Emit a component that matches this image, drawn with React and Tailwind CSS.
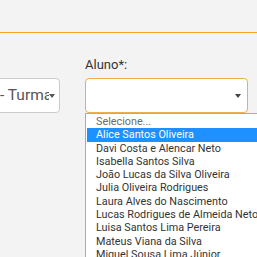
import React from "react";

const Arrow = ({ color = "#444" }) => (
  <svg width="6" height="4" viewBox="0 0 6 4" className="shrink-0">
    <path d="M0 0 L6 0 L3 4 Z" fill={color} />
  </svg>
);

const options = [
  "Alice Santos Oliveira",
  "Davi Costa e Alencar Neto",
  "Isabella Santos Silva",
  "João Lucas da Silva Oliveira",
  "Julia Oliveira Rodrigues",
  "Laura Alves do Nascimento",
  "Lucas Rodrigues de Almeida Neto",
  "Luisa Santos Lima Pereira",
  "Mateus Viana da Silva",
  "Miguel Sousa Lima Júnior",
  "Pedro Henrique Costa",
];

export default function App() {
  return (
    <div
      className="w-[257px] h-[257px] overflow-hidden bg-[#f3f3f3] text-[#333]"
      style={{ fontFamily: "Roboto, 'Liberation Sans', sans-serif" }}
    >
      <div className="h-[32px]" />
      <div className="h-px bg-[#f5a623]" />
      <div className="flex items-start pt-[23px]">
        <div className="pt-[22px] shrink-0">
          <div className="-ml-[20px] w-[80px] h-[35px] bg-white border border-[#cccccc] rounded-[4px] flex items-center pl-[19px] pr-[4px]">
            <span className="w-[49px] overflow-hidden whitespace-nowrap text-[15.5px] text-[#555]">
              - Turma A
            </span>
            <span className="flex-1" />
            <Arrow color="#555" />
          </div>
        </div>
        <div className="ml-[25px] relative w-[163px] shrink-0">
          <div className="h-[22px] text-[13px] leading-[18px] text-[#333]">Aluno*:</div>
          <div className="h-[35px] bg-white border border-[#f0ad4e] rounded-[4px] flex items-center justify-end pr-[6px]">
            <Arrow color="#444" />
          </div>
          <div className="absolute left-0 top-[57px] w-[200px] bg-white border border-[#98aece] p-px text-[10.8px] leading-[13.3px]">
            <div className="pl-[9px] h-[13.3px] text-[#6b6b6b] whitespace-nowrap">Selecione...</div>
            {options.map((o, i) => (
              <div
                key={o}
                className={
                  "pl-[9px] h-[13.3px] whitespace-nowrap " +
                  (i === 0 ? "bg-[#1e90ff] text-white" : "text-[#333]")
                }
              >
                {o}
              </div>
            ))}
          </div>
        </div>
      </div>
    </div>
  );
}
